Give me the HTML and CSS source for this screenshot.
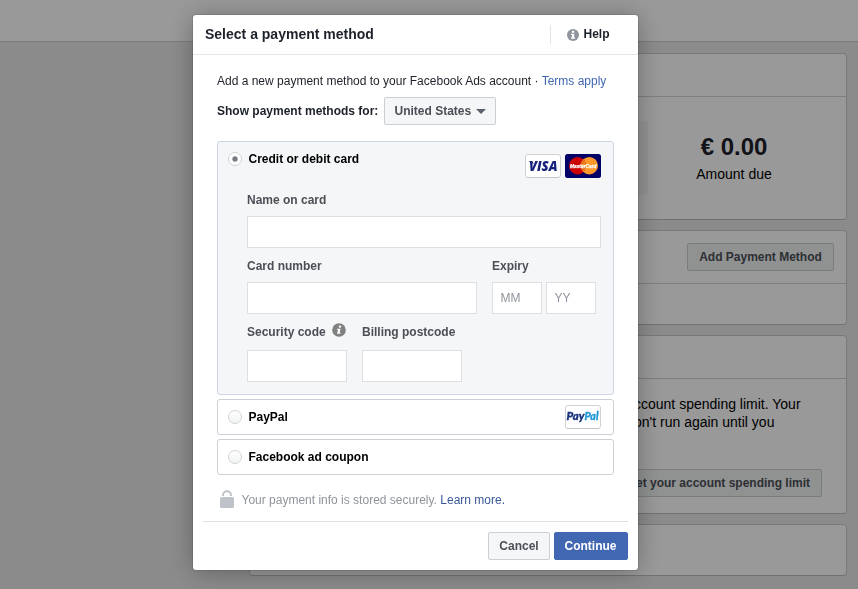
FILE: index.html
```html
<!DOCTYPE html>
<html lang="en">
<head>
<meta charset="utf-8">
<title>Select a payment method</title>
<link rel="stylesheet" href="styles.css">
</head>
<body>
<div class="topbar"></div>
<main class="page">
  <section class="panel panel-balance">
    <div class="panel-head"></div>
    <div class="balance">
      <div class="balance-chart"></div>
      <div class="amount"><strong>€ 0.00</strong><span>Amount due</span></div>
    </div>
  </section>
  <section class="panel panel-methods">
    <div class="panel-head tall"><button class="btn btn-page">Add Payment Method</button></div>
  </section>
  <section class="panel panel-limit">
    <div class="panel-head"></div>
    <div class="limit">
      <p>ccount spending limit. Your<br>on't run again until you</p>
      <button class="btn btn-page btn-limit">Set your account spending limit</button>
    </div>
  </section>
  <section class="panel panel-last"></section>
</main>
<div class="overlay">
  <div class="dialog">
    <header class="dialog-head">
      <h1>Select a payment method</h1>
      <a class="help">
        <svg width="12" height="12" viewBox="0 0 12 12"><circle cx="6" cy="6" r="6" fill="#90949c"/><path d="M4.900 1.800h2.300v2H4.900zM4 4.800h3.200v3.700H8v1.300H4V8.500h.9V6H4z" fill="#fff"/></svg>
        <span>Help</span>
      </a>
    </header>
    <div class="dialog-body">
      <p class="intro"><span>Add a new payment method to your Facebook Ads account</span> · <a>Terms apply</a></p>
      <div class="country"><b>Show payment methods for:</b><button class="btn select"><span>United States</span><i class="caret"></i></button></div>
      <section class="option card-option">
        <div class="option-row card-title">
          <i class="radio checked"></i><b>Credit or debit card</b>
          <div class="logos">
            <svg width="36" height="24" viewBox="0 0 36 24"><rect x=".5" y=".5" width="35" height="23" rx="2.5" fill="#fff" stroke="#cfd1d5"/><path d="M2 23.5h32" stroke="#c3c5c9"/><text x="4" y="17" class="visa" textLength="28.5" lengthAdjust="spacingAndGlyphs">VISA</text><path d="M3.300 7.300h4l1.500 2.700z" fill="#14207a"/></svg>
            <svg width="36" height="24" viewBox="0 0 36 24"><rect width="36" height="24" rx="2.5" fill="#000066"/><circle cx="12.7" cy="11.7" r="8.7" fill="#cc0000"/><circle cx="24.3" cy="11.7" r="8.7" fill="#ff9929"/><path d="M16 7h4M15 9h6M15 14h6M16 16h4" stroke="#d43a10" stroke-width=".8"/><text x="5" y="13.800" class="mc" textLength="26.5" lengthAdjust="spacingAndGlyphs">MasterCard</text></svg>
          </div>
        </div>
        <div class="fields">
          <label>Name on card<input class="full"></label>
          <div class="field-row">
            <label>Card number<input class="number"></label>
            <label>Expiry<span class="expiry"><input placeholder="MM"><input placeholder="YY"></span></label>
          </div>
          <div class="field-row last">
            <label><span class="code-label">Security code <svg width="14" height="14" viewBox="0 0 14 14"><circle cx="7" cy="7" r="6.8" fill="#808080"/><circle cx="8" cy="3.6" r="1.2" fill="#fff"/><path d="M5.3 5.7h3.3L7.6 9.6h1l-.3 1.2H5L6 6.9H5z" fill="#fff"/></svg></span><input></label>
            <label>Billing postcode<input></label>
          </div>
        </div>
      </section>
      <section class="option option-row">
        <i class="radio"></i><b>PayPal</b>
        <div class="logos">
          <svg width="36" height="24" viewBox="0 0 36 24"><rect x=".5" y=".5" width="35" height="23" rx="2.5" fill="#fff" stroke="#cfd1d5"/><path d="M2 23.5h32" stroke="#c3c5c9"/><text x="1.5" y="15.3" class="paypal pay" textLength="18" lengthAdjust="spacingAndGlyphs">Pay</text><text x="19.5" y="15.3" class="paypal pal" textLength="14" lengthAdjust="spacingAndGlyphs">Pal</text></svg>
        </div>
      </section>
      <section class="option option-row"><i class="radio"></i><b>Facebook ad coupon</b></section>
      <div class="secure">
        <svg width="14" height="18" viewBox="0 0 14 18"><path d="M3 6V5.200a4 4 0 0 1 8 0V6" fill="none" stroke="#bec2c9" stroke-width="1.900"/><rect y="7" width="14" height="11" rx="1.500" fill="#bec2c9"/></svg>
        <span>Your payment info is stored securely. <a>Learn more.</a></span>
      </div>
    </div>
    <footer class="dialog-foot">
      <button class="btn cancel">Cancel</button>
      <button class="btn primary">Continue</button>
    </footer>
  </div>
</div>
</body>
</html>
```
FILE: styles.css
```css
* { box-sizing: border-box; }
body { margin: 0; height: 589px; overflow: hidden; background: #e8e8e8; color: #1d2129; font: 12px/16px "Liberation Sans", Arial, sans-serif; }
h1, p { margin: 0; }
.topbar { height: 42px; background: #fff; border-bottom: 1px solid #cfcfcf; }
.page { display: flex; flex-direction: column; gap: 10px; width: 598px; margin: 11px 0 0 249px; }
.panel { background: #fff; border: 1px solid #cacaca; border-bottom-color: #bdbdbd; border-radius: 4px; }
.panel-balance { height: 167px; }
.panel-methods { height: 95px; }
.panel-limit { height: 179px; }
.panel-last { height: 52px; }
.panel-head { height: 43px; border-bottom: 1px solid #d2d2d2; }
.panel-head.tall { height: 53px; padding: 12px 12px 0; display: flex; justify-content: flex-end; }
.balance { display: flex; padding-top: 24px; justify-content: flex-end; }
.balance-chart { width: 300px; height: 74px; background: #f4f5f5; border-radius: 3px; }
.amount { width: 172px; margin-right: 26px; padding-top: 12px; text-align: center; color: #000; }
.amount strong { display: block; font-size: 24px; line-height: 28px; color: #1d2129; }
.amount span { display: block; font-size: 14px; line-height: 18px; margin-top: 4px; }
.limit { display: flex; flex-direction: column; align-items: flex-end; padding: 16px 24px 0; color: #000; }
.limit p { width: 188px; font-size: 14px; line-height: 18px; }
.btn { height: 28px; padding: 0 10px; display: flex; align-items: center; justify-content: center; background: #f5f6f7; border: 1px solid #ccd0d5; border-radius: 2px; color: #4b4f56; font: bold 12px/16px "Liberation Sans", Arial, sans-serif; white-space: nowrap; }
.btn-page { width: 147px; color: #4b4f56; background: #f1f3f3; }
.btn-limit { width: 206px; margin-top: 38px; padding: 0 11px; justify-content: flex-end; }
.overlay { position: fixed; inset: 0; background: rgba(0,0,0,.4); }
.dialog { width: 445px; height: 555px; margin: 15px 0 0 193px; display: flex; flex-direction: column; background: #fff; border-radius: 3px; box-shadow: 0 2px 26px rgba(0,0,0,.3), 0 0 0 1px rgba(0,0,0,.1); }
.dialog-head { height: 40px; border-bottom: 1px solid #e5e5e5; display: flex; justify-content: space-between; align-items: center; padding-left: 12px; }
h1 { font-size: 14px; line-height: 18px; margin-bottom: 2px; }
.help { display: flex; align-items: center; gap: 4.5px; width: 88px; height: 19px; padding-left: 16px; border-left: 1px solid #e5e5e5; font-weight: bold; }
.help span { margin-bottom: 2px; }
.dialog-body { padding: 18px 24px 0; flex: 1; }
.dialog-body a { color: #4267b2; }
.intro { white-space: nowrap; }
.country { display: flex; align-items: center; gap: 6px; margin-top: 8px; }
.select { width: 112px; gap: 5px; }
.caret { border: 5px solid transparent; border-top-color: #5b626d; border-bottom: 0; }
.option { width: 397px; border: 1px solid #ccd0d5; border-radius: 3px; margin-bottom: 4px; }
.card-option { height: 254px; margin-top: 16px; background: #f5f6f7; border-color: #cdd5e7; }
.option-row { height: 36px; display: flex; align-items: center; gap: 6.5px; padding: 0 12px 0 10px; color: #000; }
.card-title { padding-bottom: 2px; }
.logos { display: flex; gap: 4px; margin-left: auto; }
.card-title .logos { position: relative; top: 7px; }
.radio { width: 14px; height: 14px; border-radius: 50%; border: 1px solid #d1d3d6; background: linear-gradient(#fff, #f1f2f3); }
.radio.checked { background: radial-gradient(circle, #777b84 0 2.2px, #fff 3.2px); }
.visa { font: italic 800 13.5px "Open Sans", sans-serif; fill: #14207a; }
.mc { font: italic bold 6px "Liberation Sans", sans-serif; fill: #fff; stroke: #fff; stroke-width: .25px; }
.paypal { font: italic 900 10.5px Lato, sans-serif; stroke-width: .3px; }
.pay { fill: #17317f; stroke: #17317f; }
.pal { fill: #2199d8; stroke: #2199d8; }
.fields { margin: 14px 0 0 29px; color: #4b4f56; font-weight: bold; }
label { display: block; }
input { display: block; width: 100px; height: 32px; margin: 8px 0 0; padding: 0 7.5px; background: #fff; border: 1px solid #dddfe2; font: 12px "Liberation Sans", Arial, sans-serif; }
input::placeholder { color: #90949c; opacity: 1; }
.full { width: 354px; }
.number { width: 230px; }
.field-row { display: flex; gap: 15px; margin-top: 10px; }
.expiry { display: flex; gap: 4px; }
.expiry input { width: 50px; }
.last input { margin-top: 10px; }
.code-label { display: flex; gap: 6px; height: 16px; }
.code-label svg { position: relative; top: -1px; }
.secure { display: flex; gap: 7.5px; padding: 12px 0 0 3px; color: #90949c; align-items: center; }
.secure svg { position: relative; top: -1px; }
.secure a { color: #385898; }
.dialog-foot { height: 49px; margin: 0 10px; padding-top: 10px; border-top: 1px solid #dddfe2; display: flex; justify-content: flex-end; gap: 4px; }
.cancel { width: 62px; }
.primary { width: 74px; padding: 0 10px 0 9px; background: #4267b2; border-color: #4267b2; color: #fff; }
```
